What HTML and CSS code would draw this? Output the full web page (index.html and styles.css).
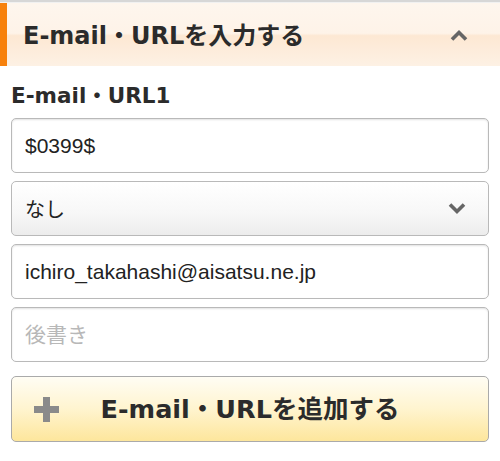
FILE: index.html
```html
<!DOCTYPE html>
<html lang="ja">
<head>
<meta charset="utf-8">
<title>E-mail・URL</title>
<link rel="stylesheet" href="styles.css">
</head>
<body>
<div class="topline"></div>
<section class="panel">
  <header class="panel-head">
    <h2 class="panel-title">E-mail・URLを入力する</h2>
    <svg class="chev-up" width="18" height="12" viewBox="0 0 18 12" aria-hidden="true">
      <polyline points="2,10.5 9,3.5 16,10.5" fill="none" stroke="#666" stroke-width="3.6"/>
    </svg>
  </header>
  <div class="panel-body">
    <div class="field-label">E-mail・URL1</div>
    <div class="fields">
      <input class="control" type="text" value="$0399$">
      <div class="select-wrap">
        <select class="control select">
          <option>なし</option>
        </select>
        <svg class="chev-down" width="18" height="12" viewBox="0 0 18 12" aria-hidden="true">
          <polyline points="2,1.5 9,8.5 16,1.5" fill="none" stroke="#666" stroke-width="3.6"/>
        </svg>
      </div>
      <input class="control" type="text" value="ichiro_takahashi@aisatsu.ne.jp">
      <input class="control" type="text" placeholder="後書き">
    </div>
    <button class="add-btn" type="button">
      <svg class="plus" width="25" height="25" viewBox="0 0 25 25" aria-hidden="true">
        <rect x="9" y="0" width="7" height="25" fill="#8a8a8a"/>
        <rect x="0" y="9" width="25" height="7" fill="#8a8a8a"/>
      </svg>
      <span class="add-label">E-mail・URLを追加する</span>
    </button>
  </div>
</section>
</body>
</html>
```

FILE: styles.css
```css
html, body {
  margin: 0;
  padding: 0;
  background: #ffffff;
}

body {
  width: 500px;
  font-family: "DejaVu Sans", "Noto Sans CJK JP", sans-serif;
  color: #2b2b2b;
}

.topline {
  height: 2px;
  background: #d7d7d7;
  border-bottom: 1px solid #f1f1f1;
}

.panel-head {
  height: 63px;
  display: flex;
  align-items: center;
  justify-content: space-between;
  border-left: 7px solid #f7810c;
  padding: 0 32px 0 16px;
  background: linear-gradient(to bottom, #fef6ee 0%, #fef3e8 48%, #fde8d3 52%, #fdeddd 80%, #fdf1e4 100%);
}

.panel-title {
  margin: 0;
  font-size: 24px;
  font-weight: bold;
  line-height: 30px;
  color: #2b2b2b;
  padding-top: 2px;
}

.chev-up {
  display: block;
  margin-top: 0;
}

.panel-body {
  padding: 16px 11px 0 11px;
}

.field-label {
  font-size: 21.5px;
  font-weight: bold;
  line-height: 28px;
  color: #2b2b2b;
  margin-bottom: 8px;
}

.fields {
  display: flex;
  flex-direction: column;
  gap: 8px;
}

.control {
  box-sizing: border-box;
  display: block;
  width: 100%;
  height: 55px;
  margin: 0;
  padding: 0 13px;
  border: 1px solid #b9b9b9;
  border-radius: 5px;
  background: #ffffff;
  box-shadow: inset 0 1px 2px rgba(0, 0, 0, 0.12);
  font-family: "Liberation Sans", "Noto Sans CJK JP", sans-serif;
  font-size: 21px;
  color: #222222;
  outline: none;
}

.control::placeholder {
  color: #b8b8b8;
}

.select-wrap {
  position: relative;
}

.select {
  -webkit-appearance: none;
  appearance: none;
  font-family: "Noto Sans CJK JP", sans-serif;
  font-size: 20px;
  background: linear-gradient(to bottom, #ffffff 0%, #f7f7f7 60%, #ececec 100%);
  box-shadow: none;
}

.chev-down {
  position: absolute;
  right: 23px;
  top: 22px;
  pointer-events: none;
}

.add-btn {
  box-sizing: border-box;
  display: flex;
  align-items: center;
  width: 100%;
  height: 66px;
  margin: 14px 0 0 0;
  padding: 0 0 0 22px;
  border: 1px solid #aaaaaa;
  border-radius: 5px;
  background: linear-gradient(to bottom, #fffdf4 0%, #fff4cf 50%, #fde69c 100%);
  font-family: "DejaVu Sans", "Noto Sans CJK JP", sans-serif;
  font-size: 25.5px;
  font-weight: bold;
  color: #2b2b2b;
  cursor: pointer;
}

.plus {
  display: block;
  flex: none;
}

.add-label {
  flex: 1;
  text-align: center;
  padding-right: 47px;
  line-height: 30px;
}
```
